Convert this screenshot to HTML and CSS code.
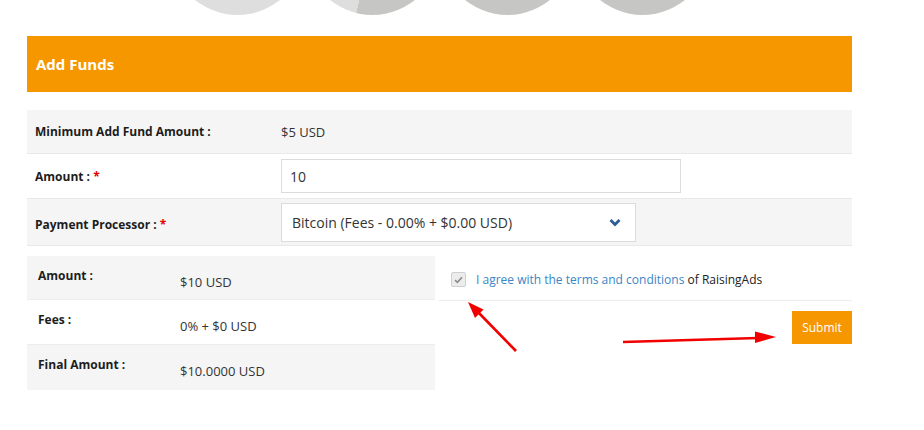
FILE: index.html
```html
<!DOCTYPE html>
<html lang="en">
<head>
<meta charset="utf-8">
<title>Add Funds</title>
<link rel="stylesheet" href="styles.css">
</head>
<body>
<div class="page">
  <div class="charts">
    <div class="pie pie-light"></div>
    <div class="pie pie-part"></div>
    <div class="pie pie-dark"></div>
    <div class="pie pie-dark"></div>
  </div>

  <div class="panel">
    <div class="panel-head">Add Funds</div>

    <div class="form">
      <div class="frow alt h44">
        <div class="flabel">Minimum Add Fund Amount :</div>
        <div class="fvalue">$5 USD</div>
      </div>
      <div class="frow h45">
        <div class="flabel">Amount : <span class="req">*</span></div>
        <div class="fvalue"><div class="input">10</div></div>
      </div>
      <div class="frow alt h47">
        <div class="flabel lower">Payment Processor : <span class="req">*</span></div>
        <div class="fvalue">
          <div class="select">
            <span>Bitcoin (Fees - 0.00% + $0.00 USD)</span>
            <svg class="chev" width="12" height="9" viewBox="0 0 12 9"><path d="M1.5 2 L6 6.5 L10.5 2" fill="none" stroke="#2c5d98" stroke-width="2.8"/></svg>
          </div>
        </div>
      </div>
    </div>

    <div class="summary">
      <div class="sum-table">
        <div class="srow alt">
          <div class="slabel">Amount :</div>
          <div class="svalue">$10 USD</div>
        </div>
        <div class="srow">
          <div class="slabel">Fees :</div>
          <div class="svalue">0% + $0 USD</div>
        </div>
        <div class="srow alt">
          <div class="slabel">Final Amount :</div>
          <div class="svalue">$10.0000 USD</div>
        </div>
      </div>
      <div class="agree-col">
        <div class="agree-row">
          <span class="checkbox"><svg width="9" height="8" viewBox="0 0 9 8"><path d="M1 4.2 L3.4 6.4 L8 1.2" fill="none" stroke="#8a8a8a" stroke-width="1.6"/></svg></span>
          <span class="agree-text"><a class="link">I agree with the terms and conditions</a> of RaisingAds</span>
        </div>
        <div class="actions">
          <button class="submit">Submit</button>
        </div>
      </div>
    </div>
  </div>

  <svg class="arrows" width="924" height="430" viewBox="0 0 924 430">
    <line x1="516" y1="351" x2="476" y2="310" stroke="#f20000" stroke-width="2.6"/>
    <polygon points="468,302 483.5,309.5 475,318" fill="#f20000"/>
    <line x1="623" y1="342" x2="758" y2="338" stroke="#f20000" stroke-width="2.6"/>
    <polygon points="776,337 755,331.5 755,343" fill="#f20000"/>
  </svg>
</div>
</body>
</html>
```

FILE: styles.css
```css
* { box-sizing: border-box; }

html, body {
  margin: 0;
  padding: 0;
  background: #ffffff;
}

body {
  font-family: "Open Sans", "Liberation Sans", Arial, sans-serif;
  color: #222;
  font-size: 12px;
}

.page {
  position: relative;
  width: 924px;
  height: 430px;
  padding-left: 27px;
}

.charts {
  width: 825px;
  height: 15px;
  overflow: hidden;
  display: flex;
  justify-content: center;
  margin-bottom: 21px;
}

.pie {
  flex: 0 0 135px;
  width: 135px;
  height: 135px;
  border-radius: 50%;
  margin-top: -120px;
}

.pie-light { background: #dedede; }
.pie-dark { background: #c6c6c5; }
.pie-part { background: conic-gradient(#c6c6c5 0deg 194deg, #dedede 194deg 360deg); }

.panel {
  width: 825px;
}

.panel-head {
  height: 56px;
  background: #f79700;
  color: #fff;
  font-weight: 700;
  font-size: 15px;
  display: flex;
  align-items: center;
  padding-left: 9px;
  margin-bottom: 18px;
}

.frow {
  display: grid;
  grid-template-columns: 254px 1fr;
  align-items: center;
  border-bottom: 1px solid #e9e9e9;
}

.frow.alt { background: #f5f5f5; }
.h44 { height: 44px; }
.h45 { height: 45px; }
.h47 { height: 47px; }

.flabel {
  padding-left: 8px;
  font-weight: 700;
  font-size: 12px;
  color: #1d1d1d;
}

.flabel.lower { padding-top: 4px; }

.req { color: #e00000; }

.fvalue { color: #333; font-size: 13px; }

.input {
  width: 400px;
  height: 34px;
  border: 1px solid #dcdcdc;
  background: #fff;
  font-size: 14px;
  color: #333;
  display: flex;
  align-items: center;
  padding-left: 8px;
}

.select {
  width: 355px;
  height: 39px;
  border: 1px solid #dcdcdc;
  background: #fff;
  font-size: 14px;
  color: #333;
  display: flex;
  align-items: center;
  justify-content: space-between;
  padding: 0 14px 0 10px;
}

.chev { display: block; }

.summary {
  display: flex;
  margin-top: 10px;
}

.sum-table {
  width: 408px;
}

.srow {
  display: grid;
  grid-template-columns: 153px 1fr;
  align-items: start;
  height: 45px;
  border-bottom: 1px solid #ececec;
}

.srow:first-child { height: 44px; }
.srow:last-child { border-bottom: none; }
.srow.alt { background: #f5f5f5; }

.slabel {
  padding: 11px 0 0 11px;
  font-weight: 700;
  font-size: 12px;
  line-height: 17px;
  color: #1d1d1d;
}

.svalue {
  padding-top: 18px;
  font-size: 13px;
  line-height: 17px;
  color: #333;
}

.agree-col {
  flex: 1;
  margin-left: 4px;
}

.agree-row {
  height: 45px;
  padding: 3px 0 0 12px;
  display: flex;
  align-items: center;
  gap: 10px;
  border-bottom: 1px solid #ececec;
}

.checkbox {
  width: 15px;
  height: 15px;
  border: 1px solid #cfcfcf;
  border-radius: 2px;
  background: #ececec;
  display: flex;
  align-items: center;
  justify-content: center;
}

.agree-text { color: #222; }

.link { color: #3a86c6; text-decoration: none; }

.actions {
  display: flex;
  justify-content: flex-end;
  padding-top: 10px;
}

.submit {
  width: 60px;
  height: 33px;
  border: none;
  background: #f79700;
  color: #fff;
  font-family: "Open Sans", "Liberation Sans", Arial, sans-serif;
  font-size: 12px;
  padding: 0;
}

.arrows {
  position: absolute;
  left: 0;
  top: 0;
  pointer-events: none;
}
```
